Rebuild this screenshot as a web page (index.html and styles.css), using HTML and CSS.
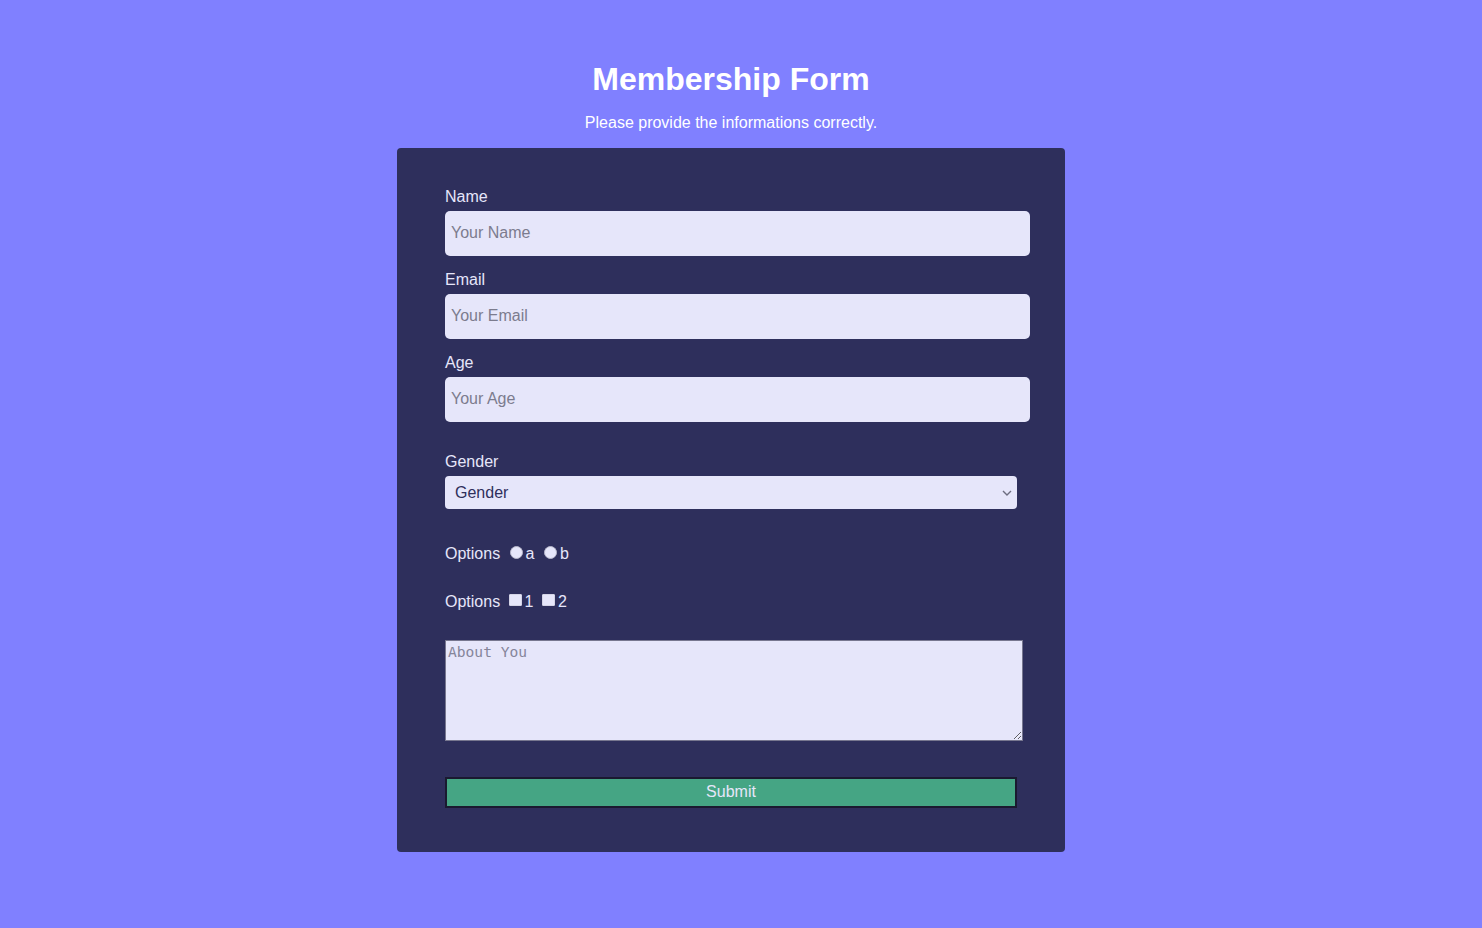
FILE: index.html
```html
<!DOCTYPE html>
<html lang="en">
<head>
<meta charset="utf-8">
<title>Membership Form</title>
<link rel="stylesheet" href="styles.css">
</head>
<body>
<div class="page">
  <h1 class="title">Membership Form</h1>
  <p class="subtitle">Please provide the informations correctly.</p>
  <form class="card">
    <label class="label" for="name">Name</label>
    <input class="field" id="name" type="text" placeholder="Your Name">
    <label class="label" for="email">Email</label>
    <input class="field" id="email" type="email" placeholder="Your Email">
    <label class="label" for="age">Age</label>
    <input class="field field-last" id="age" type="number" placeholder="Your Age">

    <label class="label label-gender" for="gender">Gender</label>
    <div class="select-wrap">
      <select class="select" id="gender">
        <option>Gender</option>
        <option>Male</option>
        <option>Female</option>
      </select>
      <svg class="chevron" width="10" height="6" viewBox="0 0 10 6"><path d="M1 1l4 4 4-4" fill="none" stroke="#6d6d80" stroke-width="1.4"/></svg>
    </div>

    <div class="opt-row opt-row-1">Options <input class="radio" type="radio" name="o" id="ra"><label for="ra">a</label> <input class="radio" type="radio" name="o" id="rb"><label for="rb">b</label></div>
    <div class="opt-row opt-row-2">Options <input class="check" type="checkbox" id="c1"><label for="c1">1</label> <input class="check" type="checkbox" id="c2"><label for="c2">2</label></div>

    <textarea class="about" placeholder="About You"></textarea>
    <button class="submit" type="button">Submit</button>
  </form>
</div>
</body>
</html>
```

FILE: styles.css
```css
html, body {
  margin: 0;
  padding: 0;
}
body {
  background: #8080ff;
  font-family: "Liberation Sans", Arial, sans-serif;
  font-size: 16px;
  min-height: 928px;
}
.page {
  width: 1462px;
  display: flex;
  flex-direction: column;
  align-items: center;
}
.title {
  margin: 61px 0 16px;
  font-size: 32px;
  font-weight: bold;
  line-height: 36.8px;
  color: #ffffff;
}
.subtitle {
  margin: 0 0 16px;
  font-size: 16px;
  line-height: 18.4px;
  color: #ffffff;
}
.card {
  box-sizing: border-box;
  width: 668px;
  height: 704px;
  padding: 39.8px 35px 0 48px;
  background: #2e2f5c;
  border-radius: 4px;
  color: #e6e6fa;
}
.label {
  display: block;
  line-height: 18.4px;
  margin-bottom: 4.7px;
  color: #e6e6fa;
}
.field {
  display: block;
  box-sizing: border-box;
  width: 585px;
  height: 45px;
  margin: 0 0 15px;
  padding: 0 6px 1px;
  border: none;
  border-radius: 5px;
  background: #e6e6fa;
  font-family: "Liberation Sans", Arial, sans-serif;
  font-size: 16px;
  color: #2e2f5c;
  outline: none;
}
.field::placeholder {
  color: #7c7c8e;
}
.field-last {
  margin-bottom: 31px;
}
.label-gender {
  margin-bottom: 4.5px;
}
.select-wrap {
  position: relative;
  width: 572px;
  height: 32.6px;
}
.select {
  display: block;
  box-sizing: border-box;
  width: 572px;
  height: 32.6px;
  padding: 0 10px;
  border: none;
  border-radius: 4px;
  background: #e6e6fa;
  -webkit-appearance: none;
  appearance: none;
  font-family: "Liberation Sans", Arial, sans-serif;
  font-size: 16px;
  color: #2e2f5c;
  outline: none;
}
.chevron {
  position: absolute;
  right: 5px;
  top: 14px;
}
.opt-row {
  line-height: 18.4px;
  color: #e6e6fa;
}
.opt-row-1 {
  margin-top: 34px;
}
.opt-row-2 {
  margin-top: 28.2px;
}
.radio, .check {
  -webkit-appearance: none;
  appearance: none;
  box-sizing: border-box;
  width: 13px;
  height: 13px;
  padding: 0;
  vertical-align: baseline;
  background: #e6e6fa;
}
.radio {
  margin: 3px 3px 0 5px;
  border-radius: 50%;
  border: 1px solid #b9b9cc;
}
.check {
  height: 12px;
  margin: 3px 3px 1px 4px;
  border-radius: 1px;
  border: 1px solid #d4d4e6;
}
.about {
  display: block;
  box-sizing: border-box;
  width: 578px;
  height: 100.5px;
  margin: 28.3px 0 0;
  padding: 2px;
  border: 1px solid #77778f;
  background: #e6e6fa;
  font-family: "DejaVu Sans Mono", monospace;
  font-size: 14.6px;
  color: #2e2f5c;
  outline: none;
}
.about::placeholder {
  color: #85859a;
}
.submit {
  display: block;
  box-sizing: border-box;
  width: 572px;
  height: 30.6px;
  margin: 36.6px 0 0;
  padding: 0;
  border: 2px solid #1a1a30;
  background: #45a584;
  font-family: "Liberation Sans", Arial, sans-serif;
  font-size: 16px;
  color: #e6e6fa;
}
```
